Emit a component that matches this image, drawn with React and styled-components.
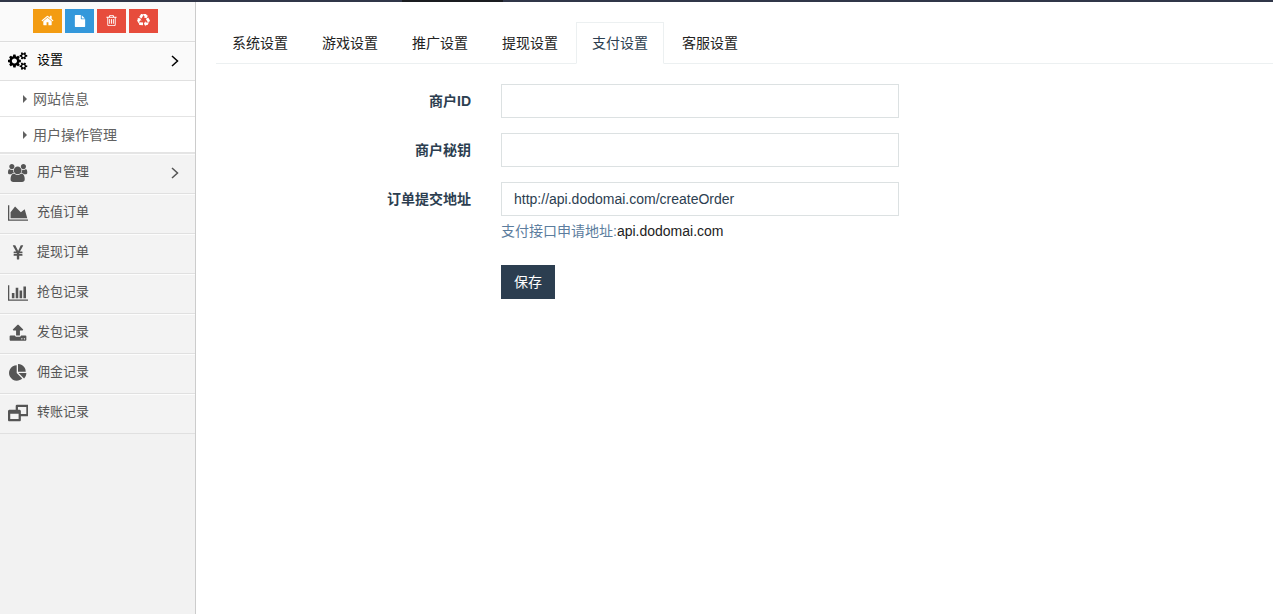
import React, { useState } from 'react'
import styled, { createGlobalStyle } from 'styled-components'

const GlobalStyle = createGlobalStyle`
  *, *::before, *::after { box-sizing: border-box; }
  body {
    margin: 0;
    background: #fff;
    color: #2c3e50;
    font-family: "Liberation Sans", "Noto Sans CJK SC", sans-serif;
    font-size: 14px;
    line-height: 20px;
  }
  button, input { font: inherit; }
`

const glyphs = {
  home: {
    width: 1792,
    d: 'M1472 992v480q0 26-19 45t-45 19h-384v-384h-256v384h-384q-26 0-45-19t-19-45v-480q0-1 .5-3t.5-3l575-474 575 474q1 2 1 6zm223-69l-62 74q-8 9-21 11h-3q-13 0-21-7l-692-577-692 577q-12 8-24 7-13-2-21-11l-62-74q-8-10-7-23.5t11-21.5l719-599q32-26 76-26t76 26l244 204v-195q0-14 9-23t23-9h192q14 0 23 9t9 23v408l219 182q10 8 11 21.5t-7 23.5z',
  },
  file: {
    width: 1792,
    d: 'M1152 512v-472q22 14 36 28l408 408q14 14 28 36h-472zm-128 32q0 40 28 68t68 28h544v1056q0 40-28 68t-68 28h-1344q-40 0-68-28t-28-68v-1600q0-40 28-68t68-28h800v544z',
  },
  trash: {
    width: 1792,
    d: 'M704 736v576q0 14-9 23t-23 9h-64q-14 0-23-9t-9-23v-576q0-14 9-23t23-9h64q14 0 23 9t9 23zm256 0v576q0 14-9 23t-23 9h-64q-14 0-23-9t-9-23v-576q0-14 9-23t23-9h64q14 0 23 9t9 23zm256 0v576q0 14-9 23t-23 9h-64q-14 0-23-9t-9-23v-576q0-14 9-23t23-9h64q14 0 23 9t9 23zm128 724v-948h-896v948q0 22 7 40.5t14.5 27 10.5 8.5h832q3 0 10.5-8.5t14.5-27 7-40.5zm-672-1076h448l-48-117q-7-9-17-11h-317q-10 2-17 11zm928 32v64q0 14-9 23t-23 9h-96v948q0 83-47 143.5t-113 60.5h-832q-66 0-113-58.5t-47-141.5v-952h-96q-14 0-23-9t-9-23v-64q0-14 9-23t23-9h309l70-167q15-37 54-63t79-26h320q40 0 79 26t54 63l70 167h309q14 0 23 9t9 23z',
  },
  recycle: {
    width: 1792,
    d: 'M836 1169l-15 368-2 22-420-29q-36-3-67-31.500t-47-65.500q-11-27-14.500-55t4-65 12-55 21.500-64 19-53q78 12 509 28zm-387-586l180 379-147-92q-63 72-111.500 144.500t-72.500 125-39.500 94.500-18.500 63l-4 21-190-357q-17-26-18-56t6-47l8-18q35-63 114-188l-140-86zm1231 517l-188 359q-12 29-36.500 46.500t-43.500 20.500l-18 4q-71 7-219 12l8 164-230-367 211-362 7 173q170 16 283 5t170-33zm-785-924q-47 63-265 435l-317-187-19-12 225-356q20-31 60-45t80-10q24 2 48.500 12t42 21 41.500 33 36 34.500 36 39.500 32 35zm655 307l212 363q18 37 12.500 76t-27.500 74q-13 20-33 37t-38 28-48.500 22-47 16-51.500 14-46 12q-34-72-265-436l313-195zm-143-226l142-83-220 373-419-20 151-86q-34-89-75-166t-75.500-123.500-64.500-80-47-46.500l-17-13 405 1q31-3 58 10.500t39 28.500l11 15q39 61 112 190z',
  },
  cogs: {
    width: 1920,
    d: 'M896 896q0-106-75-181t-181-75-181 75-75 181 75 181 181 75 181-75 75-181zm768 512q0-52-38-90t-90-38-90 38-38 90q0 53 37.5 90.5t90.5 37.5 90.5-37.5 37.5-90.5zm0-1024q0-52-38-90t-90-38-90 38-38 90q0 53 37.5 90.5t90.5 37.5 90.5-37.5 37.5-90.5zm-384 421v185q0 10-7 19.5t-16 10.5l-155 24q-11 35-32 76 34 48 90 115 7 11 7 20 0 12-7 19-23 30-82.5 89.5t-78.5 59.5q-11 0-21-7l-115-90q-37 19-77 31-11 108-23 155-7 24-30 24h-186q-11 0-20-7.5t-10-17.5l-23-153q-34-10-75-31l-118 89q-7 7-20 7-11 0-21-8-144-133-144-160 0-9 7-19 10-14 41-53t47-61q-23-44-35-82l-152-24q-10-1-17-9.5t-7-19.5v-185q0-10 7-19.5t16-10.5l155-24q11-35 32-76-34-48-90-115-7-11-7-20 0-12 7-20 22-30 82-89t79-59q11 0 21 7l115 90q34-18 77-32 11-108 23-154 7-24 30-24h186q11 0 20 7.5t10 17.5l23 153q34 10 75 31l118-89q8-7 20-7 11 0 21 8 144 133 144 160 0 8-7 19-12 16-42 54t-45 60q23 48 34 82l152 23q10 2 17 10.5t7 19.5zm640 533v140q0 16-149 31-12 27-30 52 51 113 51 138 0 4-4 7-122 71-124 71-8 0-46-47t-52-68q-20 2-30 2t-30-2q-14 21-52 68t-46 47q-2 0-124-71-4-3-4-7 0-25 51-138-18-25-30-52-149-15-149-31v-140q0-16 149-31 13-29 30-52-51-113-51-138 0-4 4-7 4-2 35-20t59-34 30-16q8 0 46 46.5t52 67.5q20-2 30-2t30 2q51-71 92-112l6-2q4 0 124 70 4 3 4 7 0 25-51 138 17 23 30 52 149 15 149 31zm0-1024v140q0 16-149 31-12 27-30 52 51 113 51 138 0 4-4 7-122 71-124 71-8 0-46-47t-52-68q-20 2-30 2t-30-2q-14 21-52 68t-46 47q-2 0-124-71-4-3-4-7 0-25 51-138-18-25-30-52-149-15-149-31v-140q0-16 149-31 13-29 30-52-51-113-51-138 0-4 4-7 4-2 35-20t59-34 30-16q8 0 46 46.5t52 67.5q20-2 30-2t30 2q51-71 92-112l6-2q4 0 124 70 4 3 4 7 0 25-51 138 17 23 30 52 149 15 149 31z',
  },
  users: {
    width: 1920,
    d: 'M593 896q-162 5-265 128h-134q-82 0-138-40.5t-56-118.5q0-353 124-353 6 0 43.5 21t97.5 42.5 119 21.5q67 0 133-23-5 37-5 66 0 139 81 256zm1071 637q0 120-73 189.5t-194 69.5h-874q-121 0-194-69.5t-73-189.5q0-53 3.5-103.5t14-109 26.5-108.5 43-97.5 62-81 85.5-53.5 111.5-20q10 0 43 21.5t73 48 107 48 135 21.5 135-21.5 107-48 73-48 43-21.5q61 0 111.5 20t85.5 53.5 62 81 43 97.5 26.5 108.5 14 109 3.5 103.5zm-1024-1277q0 106-75 181t-181 75-181-75-75-181 75-181 181-75 181 75 75 181zm704 384q0 159-112.5 271.5t-271.5 112.5-271.5-112.5-112.5-271.5 112.5-271.5 271.5-112.5 271.5 112.5 112.5 271.5zm576 225q0 78-56 118.5t-138 40.5h-134q-103-123-265-128 81-117 81-256 0-29-5-66 66 23 133 23 59 0 119-21.5t97.5-42.5 43.5-21q124 0 124 353zm-128-609q0 106-75 181t-181 75-181-75-75-181 75-181 181-75 181 75 75 181z',
  },
  area: {
    width: 2048,
    d: 'M2048 1536v128h-2048v-1536h128v1408h1920zm-384-1024l256 896h-1664v-576l448-576 576 576z',
  },
  yen: {
    width: 1792,
    d: 'M985.5 1536h-172q-13 0-22.5-9t-9.5-23v-330h-288q-13 0-22.5-9t-9.5-23v-103q0-13 9.5-22.5t22.5-9.5h288v-85h-288q-13 0-22.5-9t-9.5-23v-104q0-13 9.5-22.5t22.5-9.5h214l-321-578q-8-16 0-32 10-16 28-16h194q19 0 29 18l215 425q19 38 56 125 10-24 30.5-68t27.5-61l191-420q8-19 29-19h191q17 0 27 16 9 14 1 31l-313 579h215q13 0 22.5 9.5t9.5 22.5v104q0 14-9.5 23t-22.5 9h-290v85h290q13 0 22.5 9.5t9.5 22.5v103q0 14-9.5 23t-22.5 9h-290v330q0 13-9.5 22.5t-22.5 9.5z',
  },
  bars: {
    width: 2048,
    d: 'M640 896v512h-256v-512h256zm384-512v1024h-256v-1024h256zm1024 1152v128h-2048v-1536h128v1408h1920zm-640-896v768h-256v-768h256zm384-384v1152h-256v-1152h256z',
  },
  upload: {
    width: 1792,
    d: 'M1344 1472q0-26-19-45t-45-19-45 19-19 45 19 45 45 19 45-19 19-45zm256 0q0-26-19-45t-45-19-45 19-19 45 19 45 45 19 45-19 19-45zm128-224v320q0 40-28 68t-68 28h-1472q-40 0-68-28t-28-68v-320q0-40 28-68t68-28h427q21 56 70.5 92t110.5 36h256q61 0 110.5-36t70.5-92h427q40 0 68 28t28 68zm-325-648q-17 40-59 40h-256v448q0 26-19 45t-45 19h-256q-26 0-45-19t-19-45v-448h-256q-42 0-59-40-17-39 14-69l448-448q18-19 45-19t45 19l448 448q31 30 14 69z',
  },
  pie: {
    width: 1792,
    d: 'M768 890l546 546q-106 108-247.5 168t-298.5 60q-209 0-385.5-103t-279.5-279.5-103-385.5 103-385.5 279.5-279.5 385.5-103v762zm187 6h773q0 157-60 298.5t-168 247.5zm709-128h-768v-768q209 0 385.5 103t279.5 279.5 103 385.5z',
  },
  restore: {
    width: 2048,
    d: 'M0 704q0-56 36-92t92-36h640v-384q0-56 36-92t92-36h1024q56 0 92 36t36 92v896q0 56-36 92t-92 36h-640v384q0 56-36 92t-92 36h-1024q-56 0-92-36t-36-92zM224 1504h832v-544h-832zM1280 992h544v-704h-832v288h160q56 0 92 36t36 92z',
  },
}

function Glyph({ name, size }) {
  const { width, d } = glyphs[name]
  return (
    <svg viewBox={`0 0 ${width} 1792`} width={(size * width) / 1792} height={size} fill="currentColor" aria-hidden="true">
      <path fillRule="evenodd" d={d} />
    </svg>
  )
}

const shortcuts = [
  { label: '首页', icon: 'home', size: 13, color: '#f39c12' },
  { label: '文件', icon: 'file', size: 12, color: '#3498db' },
  { label: '删除', icon: 'trash', size: 13, color: '#e74c3c' },
  { label: '回收', icon: 'recycle', size: 13, color: '#e74c3c' },
]

const menu = [
  { icon: 'cogs', text: '设置', arrow: true, active: true, children: ['网站信息', '用户操作管理'] },
  { icon: 'users', text: '用户管理', arrow: true },
  { icon: 'area', text: '充值订单' },
  { icon: 'yen', text: '提现订单' },
  { icon: 'bars', text: '抢包记录' },
  { icon: 'upload', text: '发包记录' },
  { icon: 'pie', text: '佣金记录' },
  { icon: 'restore', text: '转账记录' },
]

const tabs = ['系统设置', '游戏设置', '推广设置', '提现设置', '支付设置', '客服设置']

function Sidebar() {
  return (
    <Side>
      <Shortcuts>
        {shortcuts.map(s => (
          <Shortcut key={s.label} type="button" aria-label={s.label} $color={s.color}>
            <Glyph name={s.icon} size={s.size} />
          </Shortcut>
        ))}
      </Shortcuts>
      <nav>
        <List>
          {menu.map(item => (
            <li key={item.text}>
              <MenuLink href="#" $active={item.active}>
                <MenuIcon><Glyph name={item.icon} size={18} /></MenuIcon>
                <MenuText>{item.text}</MenuText>
                {item.arrow && (
                  <svg width="8" height="12" viewBox="0 0 8 12" fill="none" stroke="currentColor" strokeWidth="1.5" aria-hidden="true">
                    <path d="M1 1l5.500 5-5.500 5" />
                  </svg>
                )}
              </MenuLink>
              {item.children && (
                <SubList>
                  {item.children.map(text => (
                    <li key={text}>
                      <SubLink href="#">
                        <svg width="4" height="8" viewBox="0 0 4 8" fill="currentColor" aria-hidden="true"><path d="M0 0l4 4-4 4z" /></svg>
                        {text}
                      </SubLink>
                    </li>
                  ))}
                </SubList>
              )}
            </li>
          ))}
        </List>
      </nav>
    </Side>
  )
}

function PaymentForm() {
  const [form, setForm] = useState({ id: '', secret: '', url: 'http://api.dodomai.com/createOrder' })
  const change = e => setForm({ ...form, [e.target.name]: e.target.value })

  return (
    <Form onSubmit={e => e.preventDefault()}>
      <Label htmlFor="id">商户ID</Label>
      <Input id="id" name="id" value={form.id} onChange={change} />

      <Label htmlFor="secret">商户秘钥</Label>
      <Input id="secret" name="secret" value={form.secret} onChange={change} />

      <Label htmlFor="url">订单提交地址</Label>
      <div>
        <Input id="url" name="url" value={form.url} onChange={change} />
        <Help>支付接口申请地址:<HelpLink href="#">api.dodomai.com</HelpLink></Help>
      </div>

      <Save type="submit">保存</Save>
    </Form>
  )
}

export default function App() {
  const [current, setCurrent] = useState('支付设置')

  return (
    <>
      <GlobalStyle />
      <Page>
        <TopBar><TopBarActive /></TopBar>
        <Body>
          <Sidebar />
          <Main>
            <Tabs role="tablist">
              {tabs.map(t => (
                <Tab key={t} type="button" role="tab" aria-selected={t === current} $active={t === current} onClick={() => setCurrent(t)}>{t}</Tab>
              ))}
            </Tabs>
            <PaymentForm />
          </Main>
        </Body>
      </Page>
    </>
  )
}

const Page = styled.div`
  display: flex;
  flex-direction: column;
  min-height: 100vh;
`

const TopBar = styled.header`
  display: flex;
  height: 2px;
  padding-left: 402px;
  background: #303648;
`

const TopBarActive = styled.div`
  width: 101px;
  background: #1a1c20;
`

const Body = styled.div`
  display: flex;
  flex: 1;
`

const Side = styled.aside`
  flex: none;
  width: 196px;
  background: #f2f2f2;
  border-right: 1px solid #ccc;
`

const Shortcuts = styled.div`
  display: flex;
  justify-content: center;
  align-items: center;
  gap: 3px;
  height: 40px;
  padding: 0 4px 2px 0;
  background: #fafafa;
  border-bottom: 1px solid #ddd;
`

const Shortcut = styled.button`
  display: flex;
  align-items: center;
  justify-content: center;
  width: 29px;
  height: 24px;
  padding: 0;
  border: 0;
  color: #fff;
  background: ${props => props.$color};
  cursor: pointer;
`

const List = styled.ul`
  margin: 0;
  padding: 0;
  list-style: none;
`

const MenuLink = styled.a`
  display: flex;
  align-items: center;
  height: ${props => (props.$active ? '39px' : '40px')};
  padding: 0 16px 2px 3px;
  border-top: 1px solid #fcfcfc;
  border-bottom: 1px solid #e0e0e0;
  background: ${props => (props.$active ? '#fafafa' : '#f3f3f3')};
  color: ${props => (props.$active ? '#000' : '#555')};
  font-size: 13px;
  text-decoration: none;
`

const MenuIcon = styled.span`
  display: flex;
  justify-content: center;
  width: 30px;
  margin-right: 4px;
`

const MenuText = styled.span`
  flex: 1;
  padding-bottom: 2px;
`

const SubList = styled(List)`
  background: #fff;
  border-bottom: 1px solid #e5e5e5;
`

const SubLink = styled.a`
  display: flex;
  align-items: center;
  gap: 6px;
  height: 36px;
  padding-left: 23px;
  border-bottom: 1px solid #e4e4e4;
  color: #616161;
  text-decoration: none;
`

const Main = styled.main`
  flex: 1;
  min-width: 0;
  padding: 20px 0 20px 20px;
`

const Tabs = styled.div`
  display: flex;
  gap: 2px;
  border-bottom: 1px solid #ecf0f1;
`

const Tab = styled.button`
  height: 42px;
  margin-bottom: -1px;
  padding: 0 15px;
  border: 1px solid ${props => (props.$active ? '#ecf0f1' : 'transparent')};
  border-bottom-color: ${props => (props.$active ? '#fff' : 'transparent')};
  background: ${props => (props.$active ? '#fff' : 'transparent')};
  color: ${props => (props.$active ? '#2c3e50' : '#222')};
  cursor: pointer;
`

const Form = styled.form`
  display: grid;
  grid-template-columns: 255fr 398fr 344fr;
  column-gap: 30px;
  row-gap: 15px;
  padding-top: 20px;
`

const Label = styled.label`
  grid-column: 1;
  padding-top: 7px;
  font-weight: bold;
  text-align: right;
`

const Input = styled.input`
  width: 100%;
  height: 34px;
  padding: 6px 12px;
  border: 1px solid #dce1e2;
  border-radius: 0;
  background: #fff;
  color: #2c3e50;
  outline: none;
`

const Help = styled.p`
  margin: 5px 0 9px;
  color: #5c7d9e;
`

const HelpLink = styled.a`
  color: #222;
  text-decoration: none;
`

const Save = styled.button`
  grid-column: 2;
  justify-self: start;
  height: 34px;
  padding: 0 13px;
  border: 0;
  background: #2c3e50;
  color: #fff;
  cursor: pointer;
`
